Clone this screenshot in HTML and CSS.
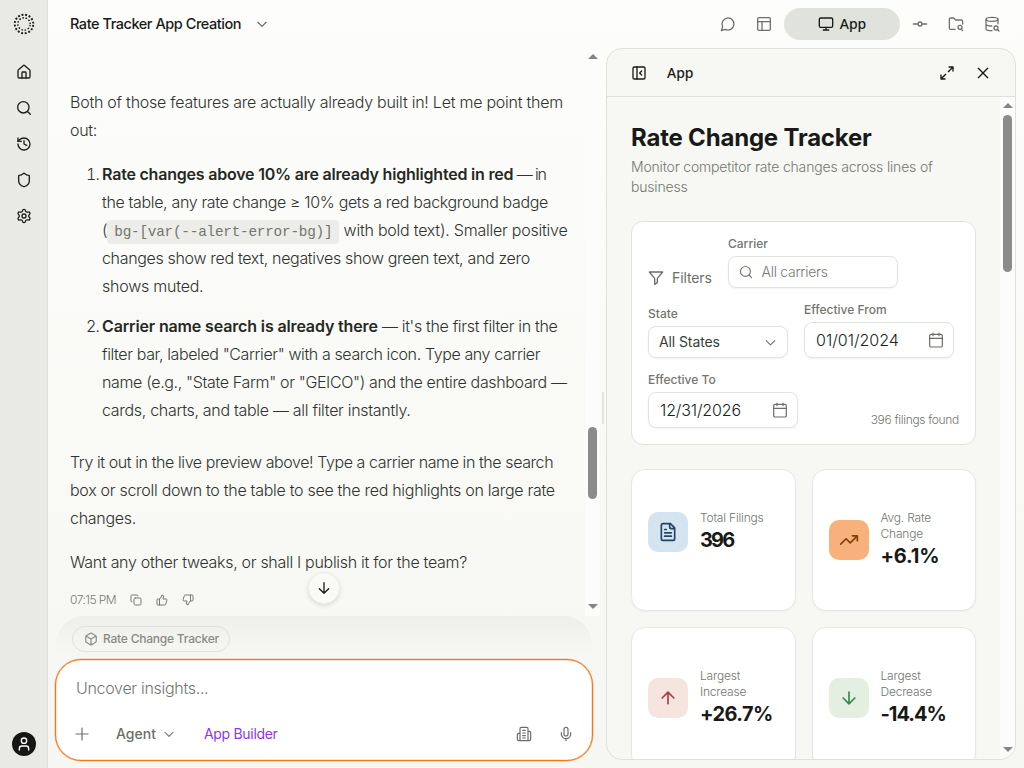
FILE: index.html
```html
<!DOCTYPE html>
<html lang="en">
<head>
<meta charset="utf-8">
<title>Rate Tracker App Creation</title>
<link rel="stylesheet" href="styles.css">
</head>
<body>
<div class="shell">
  <nav class="rail">
    <svg class="logo" viewBox="0 0 24 24"><circle cx="12" cy="12" r="9.300" stroke-width="1.900" stroke-dasharray="1.900 1.752" stroke-dashoffset="2.776"/><circle cx="12" cy="12" r="6.200" stroke-width="1.500" stroke-dasharray="1.500 1.746" stroke-dashoffset="2.373"/></svg>
    <svg class="ico" viewBox="0 0 24 24"><path d="M15 21v-8a1 1 0 0 0-1-1h-4a1 1 0 0 0-1 1v8"/><path d="M3 10a2 2 0 0 1 .7-1.5l7-6a2 2 0 0 1 2.6 0l7 6A2 2 0 0 1 21 10v9a2 2 0 0 1-2 2H5a2 2 0 0 1-2-2z"/></svg>
    <svg class="ico" viewBox="0 0 24 24"><circle cx="11" cy="11" r="8.5"/><path d="m21.5 21.5-4.3-4.3"/></svg>
    <svg class="ico" viewBox="0 0 24 24"><path d="M3 12a9 9 0 1 0 9-9 9.75 9.75 0 0 0-6.74 2.74L3 8"/><path d="M3 3v5h5M12 7v5l4 2"/></svg>
    <svg class="ico" viewBox="0 0 24 24"><path d="M20 13c0 5-3.5 7.5-7.66 8.95a1 1 0 0 1-.67-.01C7.5 20.5 4 18 4 13V6a1 1 0 0 1 1-1c2 0 4.500-1.200 6.240-2.720a1.170 1.170 0 0 1 1.520 0C14.510 3.810 17 5 19 5a1 1 0 0 1 1 1z"/></svg>
    <svg class="ico" viewBox="0 0 24 24"><path d="M9.670 4.140a2.340 2.340 0 0 1 4.660 0 2.340 2.340 0 0 0 3.320 1.910 2.340 2.340 0 0 1 2.330 4.030 2.340 2.340 0 0 0 0 3.830 2.340 2.340 0 0 1-2.330 4.030 2.340 2.340 0 0 0-3.320 1.920 2.340 2.340 0 0 1-4.660 0 2.340 2.340 0 0 0-3.320-1.920 2.340 2.340 0 0 1-2.330-4.030 2.340 2.340 0 0 0 0-3.830 2.340 2.340 0 0 1 2.330-4.030 2.340 2.340 0 0 0 3.320-1.910"/><circle cx="12" cy="12" r="3"/></svg>
    <div class="avatar"><svg viewBox="0 0 24 24"><circle cx="12" cy="7" r="4"/><path d="M19 21v-2a4 4 0 0 0-4-4H9a4 4 0 0 0-4 4v2"/></svg></div>
  </nav>

  <div class="main">
    <header class="topbar">
      <h1 class="thread-title">Rate Tracker App Creation</h1>
      <svg class="ico title-caret" viewBox="0 0 24 24"><path d="m5 9 7 7 7-7"/></svg>
      <div class="tabs">
        <span class="tab"><svg class="ico" viewBox="0 0 24 24"><path d="M7.900 20A9 9 0 1 0 4 16.100L2 22Z"/></svg></span>
        <span class="tab"><svg class="ico" viewBox="0 0 24 24"><rect x="2.500" y="2.500" width="19" height="19" rx="2"/><path d="M2.500 8.500h19M9 21.500v-13"/></svg></span>
        <span class="tab tab-active"><svg class="ico" viewBox="0 0 24 24"><rect x="2" y="3" width="20" height="14" rx="2"/><path d="M8 21h8M12 17v4"/></svg><span class="tab-label">App</span></span>
        <span class="tab"><svg class="ico" viewBox="0 0 24 24"><circle cx="12" cy="12" r="3"/><path d="M2 12h7M15 12h7"/></svg></span>
        <span class="tab"><svg class="ico" viewBox="0 0 24 24"><path d="M10.700 20H4a2 2 0 0 1-2-2V5a2 2 0 0 1 2-2h3.900a2 2 0 0 1 1.690.9l.81 1.200a2 2 0 0 0 1.670.9H20a2 2 0 0 1 2 2v4.100"/><path d="m22 22-2.100-2.100"/><circle cx="18" cy="17" r="3"/></svg></span>
        <span class="tab"><svg class="ico" viewBox="0 0 24 24"><ellipse cx="12" cy="5" rx="9" ry="3"/><path d="M21 11.700V5M3 5v14a9 3 0 0 0 9 3M3 12a9 3 0 0 0 8.600 3"/><path d="m22.500 22.500-1.900-1.900"/><circle cx="18" cy="18" r="3"/></svg></span>
      </div>
    </header>

    <div class="columns">
      <section class="chat">
        <div class="scroller">
          <article class="message">
            <p><span class="l1">Both of those features are actually already built in! Let me point them</span><br><span>out:</span></p>
            <ol>
              <li><b class="l2">Rate changes above 10% are already highlighted in red</b><span class="l3"> — in</span><br>
                <span class="l4">the table, any rate change ≥ 10% gets a red background badge</span><br>
                <span>(</span><code>bg-[var(--alert-error-bg)]</code><span class="l5"> with bold text). Smaller positive</span><br>
                <span class="l6">changes show red text, negatives show green text, and zero</span><br>
                <span class="l5">shows muted.</span></li>
              <li><b class="l7">Carrier name search is already there</b><span class="l8"> — it's the first filter in the</span><br>
                <span class="l9">filter bar, labeled "Carrier" with a search icon. Type any carrier</span><br>
                <span class="l10">name (e.g., "State Farm" or "GEICO") and the entire dashboard —</span><br>
                <span class="l11">cards, charts, and table — all filter instantly.</span></li>
            </ol>
            <p><span class="l12">Try it out in the live preview above! Type a carrier name in the search</span><br>
              <span class="l13">box or scroll down to the table to see the red highlights on large rate</span><br>
              <span class="l13">changes.</span></p>
            <p class="closing"><span class="l14">Want any other tweaks, or shall I publish it for the team?</span></p>
            <div class="meta"><time>07:15 PM</time>
              <svg class="ico" viewBox="0 0 24 24"><rect x="8" y="8" width="14" height="14" rx="2.500"/><path d="M4 16c-1.100 0-2-.9-2-2V4c0-1.100.9-2 2-2h10c1.100 0 2 .9 2 2"/></svg>
              <svg class="ico" viewBox="0 0 24 24"><path d="M7 10v12M15 5.880 14 10h5.830a2 2 0 0 1 1.920 2.560l-2.330 8A2 2 0 0 1 17.500 22H4a2 2 0 0 1-2-2v-8a2 2 0 0 1 2-2h2.760a2 2 0 0 0 1.790-1.110L12 2a3.130 3.130 0 0 1 3 3.880Z"/></svg>
              <svg class="ico" viewBox="0 0 24 24"><path d="M17 14V2M9 18.120 10 14H4.170a2 2 0 0 1-1.920-2.560l2.330-8A2 2 0 0 1 6.500 2H20a2 2 0 0 1 2 2v8a2 2 0 0 1-2 2h-2.760a2 2 0 0 0-1.790 1.110L12 22a3.130 3.130 0 0 1-3-3.880Z"/></svg>
            </div>
          </article>
          <div class="scrollbar"><i class="up"></i><div class="lane"><b class="thumb chat-thumb"></b></div><i class="down"></i></div>
          <button class="jump"><svg class="ico" viewBox="0 0 24 24"><path d="M12 4v16M5 13l7 7 7-7"/></svg></button>
        </div>
        <div class="dock">
          <div class="attached"><span class="chip"><svg class="ico" viewBox="0 0 24 24"><path d="M11 21.730a2 2 0 0 0 2 0l7-4A2 2 0 0 0 21 16V8a2 2 0 0 0-1-1.730l-7-4a2 2 0 0 0-2 0l-7 4A2 2 0 0 0 3 8v8a2 2 0 0 0 1 1.730zM12 22V12M3.300 7 12 12l8.700-5"/></svg><span>Rate Change Tracker</span></span></div>
          <div class="composer">
            <div class="placeholder">Uncover insights...</div>
            <div class="tools">
              <svg class="ico" viewBox="0 0 24 24"><path d="M3 12h18M12 3v18"/></svg>
              <span class="agent">Agent</span>
              <svg class="ico agent-caret" viewBox="0 0 24 24"><path d="m5 9 7 7 7-7"/></svg>
              <span class="builder">App Builder</span>
              <svg class="ico docs" viewBox="0 0 24 24"><path d="M6 22V4a2 2 0 0 1 2-2h8a2 2 0 0 1 2 2v18ZM6 11H4a2 2 0 0 0-2 2v7a2 2 0 0 0 2 2h2M18 8h2a2 2 0 0 1 2 2v10a2 2 0 0 1-2 2h-2M10 6.500h4M10 10.500h4M10 14.500h4M10 18h4"/></svg>
              <svg class="ico mic" viewBox="0 0 24 24"><path d="M12 19v3M19 10v2a7 7 0 0 1-14 0v-2"/><rect x="9" y="2" width="6" height="13" rx="3"/></svg>
            </div>
          </div>
        </div>
      </section>
      <div class="grip"></div>

      <section class="panel">
        <header class="panel-head">
          <svg class="ico" viewBox="0 0 24 24"><rect x="3" y="3" width="18" height="18" rx="2"/><path d="M9 3v18M16 15l-3-3 3-3"/></svg>
          <span>App</span>
          <svg class="ico expand" viewBox="0 0 24 24"><path d="M15 3h6v6M21 3l-7 7M3 21l7-7M9 21H3v-6"/></svg>
          <svg class="ico" viewBox="0 0 24 24"><path d="M19 5 5 19M5 5l14 14"/></svg>
        </header>
        <div class="panel-body">
          <div class="app">
            <h2>Rate Change Tracker</h2>
            <p class="sub"><span class="s1">Monitor competitor rate changes across lines of</span><br><span class="s2">business</span></p>
            <div class="filters">
              <div class="filters-title"><svg class="ico" viewBox="0 0 24 24"><path d="M2 3h20l-8 9.500V19l-4 2.500v-9z"/></svg><span>Filters</span></div>
              <div class="field carrier"><label>Carrier</label><div class="input"><svg class="ico" viewBox="0 0 24 24"><circle cx="11" cy="11" r="8.500"/><path d="m21.500 21.500-4.300-4.300"/></svg><span class="hint">All carriers</span></div></div>
              <div class="field state"><label>State</label><div class="input"><span>All States</span><svg class="ico" viewBox="0 0 24 24"><path d="m4 8.500 8 8 8-8"/></svg></div></div>
              <div class="field date"><label>Effective From</label><div class="input"><span>01/01/2024</span><svg class="ico" viewBox="0 0 24 24"><path d="M7.500 1.500v4M16.500 1.500v4M2.500 9.500h19"/><rect x="2.500" y="3.500" width="19" height="19" rx="2"/></svg></div></div>
              <div class="field date"><label>Effective To</label><div class="input"><span class="d2">12/31/2026</span><svg class="ico" viewBox="0 0 24 24"><path d="M7.500 1.500v4M16.500 1.500v4M2.500 9.500h19"/><rect x="2.500" y="3.500" width="19" height="19" rx="2"/></svg></div></div>
              <div class="found">396 filings found</div>
            </div>
            <div class="cards">
              <div class="card"><div class="badge blue"><svg class="ico" viewBox="0 0 24 24"><path d="M15 2H6a2 2 0 0 0-2 2v16a2 2 0 0 0 2 2h12a2 2 0 0 0 2-2V7ZM14 2v4a2 2 0 0 0 2 2h4M10 9H8M16 13H8M16 17H8"/></svg></div><div><div class="k">Total Filings</div><div class="v tightest">396</div></div></div>
              <div class="card"><div class="badge orange"><svg class="ico" viewBox="0 0 24 24"><path d="M16 7h6v6M22 7l-8.500 8.500-5-5L2 17"/></svg></div><div><div class="k">Avg. Rate<br>Change</div><div class="v">+6.1%</div></div></div>
              <div class="card"><div class="badge red"><svg class="ico" viewBox="0 0 24 24"><path d="m5 12 7-7 7 7M12 19V5"/></svg></div><div><div class="k">Largest<br>Increase</div><div class="v tight">+26.7%</div></div></div>
              <div class="card"><div class="badge green"><svg class="ico" viewBox="0 0 24 24"><path d="m19 12-7 7-7-7M12 5v14"/></svg></div><div><div class="k">Largest<br>Decrease</div><div class="v tighter">-14.4%</div></div></div>
            </div>
          </div>
          <div class="scrollbar"><i class="up"></i><div class="lane"><b class="thumb app-thumb"></b></div><i class="down"></i></div>
        </div>
      </section>
    </div>
  </div>
</div>
</body>
</html>
```
FILE: styles.css
```css
* { box-sizing: border-box; }
body { margin: 0; font-family: Inter, "Liberation Sans", sans-serif; color: #30322e; }
h1, h2, p, ol { margin: 0; padding: 0; }
.ico { width: 16px; height: 16px; flex: none; display: block; fill: none; stroke: currentColor; stroke-width: 2; stroke-linecap: round; stroke-linejoin: round; }

.shell { display: flex; width: 1024px; height: 768px; overflow: hidden; background: linear-gradient(#fdfdfc, #f6f7f2); }
.rail { width: 48px; flex: none; background: #e9eae6; border-right: 1px solid #dfe1dc; display: flex; flex-direction: column; align-items: center; padding: 12px 0; color: #1d1f1c; }
.rail .ico { margin-bottom: 20px; }
.logo { width: 24px; height: 24px; margin-bottom: 28px; fill: none; stroke: #1a1b19; flex: none; }
.avatar { width: 24px; height: 24px; border-radius: 50%; background: #161715; margin-top: auto; display: grid; place-items: center; }
.avatar svg { width: 16px; height: 16px; fill: none; stroke: #fff; stroke-width: 2; stroke-linecap: round; }

.main { flex: 1; min-width: 0; display: flex; flex-direction: column; }
.topbar { height: 48px; display: flex; align-items: center; padding-left: 22px; padding-right: 14px; flex: none; }
.thread-title { font-size: 14.5px; font-weight: 500; letter-spacing: -.45px; padding-bottom: 2px; color: #191a18; white-space: nowrap; }
.title-caret { width: 14px; height: 14px; margin-left: 14px; color: #666963; }
.tabs { margin-left: auto; display: flex; align-items: center; color: #6c6f69; }
.tab { width: 36px; height: 32px; display: flex; align-items: center; justify-content: center; }
.tab .ico { stroke-width: 1.9; }
.tab-active { width: 116px; margin: 0 2px; background: #e0e3dc; border-radius: 16px; color: #191a18; font: 500 14px "Noto Sans", sans-serif; gap: 6px; }
.tab-label { padding-bottom: 1px; }
.tab-active .ico { stroke-width: 2; }

.columns { flex: 1; min-height: 0; display: flex; padding: 0 8px 8px 0; }
.chat { width: 552px; display: flex; flex-direction: column; flex: none; }
.scroller { height: 568px; flex: none; position: relative; display: flex; }
.message { flex: 1; padding: 40px 0 0 22px; font-size: 16px; font-weight: 300; line-height: 28px; letter-spacing: -.3px; white-space: nowrap; color: #30322e; }
.message b { font-weight: 600; color: #262824; }
.message ol { padding-left: 32px; margin: 16px 0 24px; }
.message li + li { margin-top: 12px; }
.message li::marker { letter-spacing: -1px; }
.message code { font: 14.4px/24px "Liberation Mono", monospace; letter-spacing: -.25px; color: #73766f; background: #ecede9; border-radius: 4px; padding: 4px 7px; }
.l1 { letter-spacing: -.245px; }
.message .l2 { letter-spacing: -.21px; }
.l3 { letter-spacing: -1.1px; }
.l4, .l10 { letter-spacing: -.35px; }
.l5 { letter-spacing: -.23px; }
.l6, .l8 { letter-spacing: -.33px; }
.message .l7 { letter-spacing: -.14px; }
.l9 { letter-spacing: -.385px; }
.l12 { letter-spacing: -.415px; }
.l13 { letter-spacing: -.285px; }
.closing { margin-top: 16px; }
.meta { display: flex; align-items: center; gap: 14px; height: 14px; margin-top: 17px; font-size: 12px; line-height: 14px; letter-spacing: -.55px; color: #777a74; }
.meta .ico { width: 12px; height: 12px; }
.scrollbar { width: 15px; background: #fcfcfc; display: flex; flex-direction: column; align-items: center; padding: 6px 0 7px; flex: none; }
.scrollbar i { border: 5px solid transparent; height: 0; }
.scrollbar .up { border-top: 0; border-bottom: 5px solid #858585; }
.scrollbar .down { border-bottom: 0; border-top: 5px solid #858585; }
.lane { flex: 1; }
.thumb { display: block; width: 9px; border-radius: 5px; background: #8b8b8b; }
.chat-thumb { height: 72px; margin-top: 368px; }
.app-thumb { height: 157px; margin-top: 7px; }
.jump { position: absolute; left: 260px; bottom: 12px; width: 32px; height: 32px; padding: 0; border: 1px solid #eceee9; border-radius: 50%; background: #fafaf7; display: grid; place-items: center; color: #1b1c1a; box-shadow: 0 2px 4px #0000001c; }

.dock { display: flex; flex-direction: column; flex: none; padding-left: 7px; width: 545px; }
.attached { height: 42px; margin: 0 1px; border-radius: 28px 28px 0 0; background: linear-gradient(#eeefeb, #f7f8f4); padding: 10px 16px; }
.chip { display: inline-flex; align-items: center; gap: 6px; width: 158px; height: 26px; padding-left: 11px; border: 1px solid #dfe1db; border-radius: 13px; font-size: 12px; font-weight: 500; letter-spacing: -.22px; color: #888b85; white-space: nowrap; }
.chip span { padding-bottom: 1px; }
.chip .ico { width: 14px; height: 14px; margin-right: -1px; }
.composer { height: 102px; margin: 1px 0 0 0; border: 1px solid #f77418; border-radius: 26px; background: #fff; box-shadow: 0 0 0 .5px #f7741866, inset 0 0 0 .5px #f7741866; padding: 16px 18px 0 20px; width: 538px; }
.placeholder { font-size: 16px; font-weight: 300; line-height: 24px; letter-spacing: -.3px; color: #737670; }
.tools { display: flex; align-items: center; margin: 24px 0 0 -2px; height: 20px; color: #6c6f69; font-size: 14px; }
.tools .ico { stroke-width: 1.8; }
.tools span { padding-bottom: 1px; }
.agent { margin-left: 26px; font-weight: 500; }
.agent-caret { width: 14px; margin-left: 6px; }
.builder { margin-left: 28px; color: #8b35f5; letter-spacing: -.3px; }
.docs { margin-left: auto; }
.mic { margin-left: 26px; }
.grip { width: 6px; height: 32px; margin: 344px 0 0 -2px; border-right: 2px solid #e2e4de; }
.grip + .panel { margin-left: 2px; }

.panel { flex: 1; border: 1px solid #dfe1db; border-radius: 16px; background: #f7f8f4; overflow: hidden; display: flex; flex-direction: column; }
.panel-head { height: 48px; flex: none; border-bottom: 1px solid #dfe1db; padding: 0 24px; display: flex; align-items: center; color: #191a18; font: 500 14px "Noto Sans", sans-serif; }
.panel-head span { margin-left: 20px; }
.expand { margin-left: auto; margin-right: 20px; }
.panel-body { flex: 1; min-height: 0; display: flex; }
.app { flex: 1; padding: 24px 24px 0; overflow: hidden; }
.app h2 { font-size: 24px; line-height: 32px; padding-top: 1px; font-weight: 650; letter-spacing: -.2px; color: #191a18; white-space: nowrap; }
.sub { margin-top: 3px; font-size: 14px; line-height: 20px; font-weight: 300; color: #737670; white-space: nowrap; }
.s1, .s2 { letter-spacing: -.18px; }
.filters { margin-top: 24px; height: 224px; padding: 16px; border: 1px solid #e1e3dd; border-radius: 12px; background: #fff; display: flex; flex-wrap: wrap; gap: 16px; align-items: flex-end; align-content: flex-start; }
.filters-title { width: 64px; height: 20px; display: flex; align-items: center; gap: 8px; font-size: 14px; letter-spacing: -.1px; color: #6c6f69; }
.filters-title span { padding-bottom: 1px; }
.field label { display: block; font-size: 12px; line-height: 12px; margin-bottom: 6px; font-weight: 500; color: #73766f; white-space: nowrap; }
.input { height: 32px; border: 1px solid #e1e3dd; border-radius: 8px; display: flex; align-items: center; justify-content: space-between; padding: 0 10px; font-size: 14px; color: #3a3c38; box-shadow: 0 1px 2px #0000000d; white-space: nowrap; }
.carrier { width: 170px; }
.carrier .input { justify-content: flex-start; gap: 9px; color: #777a74; }
.carrier .ico { width: 14px; height: 14px; margin-left: -.5px; }
.hint { font-weight: 300; letter-spacing: -.27px; padding-bottom: 2px; }
.state { width: 140px; }
.state span { letter-spacing: -.1px; padding-bottom: 2px; }
.state .ico { width: 13px; height: 13px; color: #6c6f69; }
.date { width: 150px; }
.date .input { height: 36px; font-size: 16px; font-weight: 300; padding: 0 9px 0 11px; color: #20211f; }
.date .d2 { letter-spacing: -.15px; }
.date .ico { color: #6c6f69; stroke-width: 1.8; }
.found { margin-left: auto; font-size: 12px; line-height: 16px; font-weight: 300; letter-spacing: -.32px; color: #737670; white-space: nowrap; }
.cards { margin-top: 24px; display: grid; grid-template-columns: 1fr 1fr; grid-auto-rows: 142px; gap: 16px; }
.card { border: 1px solid #e7e7e6; border-radius: 14px; background: #fff; padding: 40px 16px; display: flex; gap: 12px; box-shadow: 0 1px 2px #0000000a; white-space: nowrap; align-items: center; }
.card:first-child { padding-bottom: 56px; }
.badge { width: 40px; height: 40px; border-radius: 10px; display: grid; place-items: center; flex: none; }
.badge .ico { width: 20px; height: 20px; }
.blue { background: #d5e4f1; color: #244562; }
.orange { background: #f9b17b; color: #814011; }
.red { background: #f5e5de; color: #a93c42; }
.green { background: #e4efe1; color: #308c50; }
.k { font-size: 12px; line-height: 16px; font-weight: 300; letter-spacing: -.2px; color: #737670; }
.v { font-size: 20px; line-height: 28px; font-weight: 700; letter-spacing: -.2px; color: #191a18; }
.tight { letter-spacing: -.6px; }
.tighter { letter-spacing: -1px; }
.tightest { letter-spacing: -1.8px; }
```
